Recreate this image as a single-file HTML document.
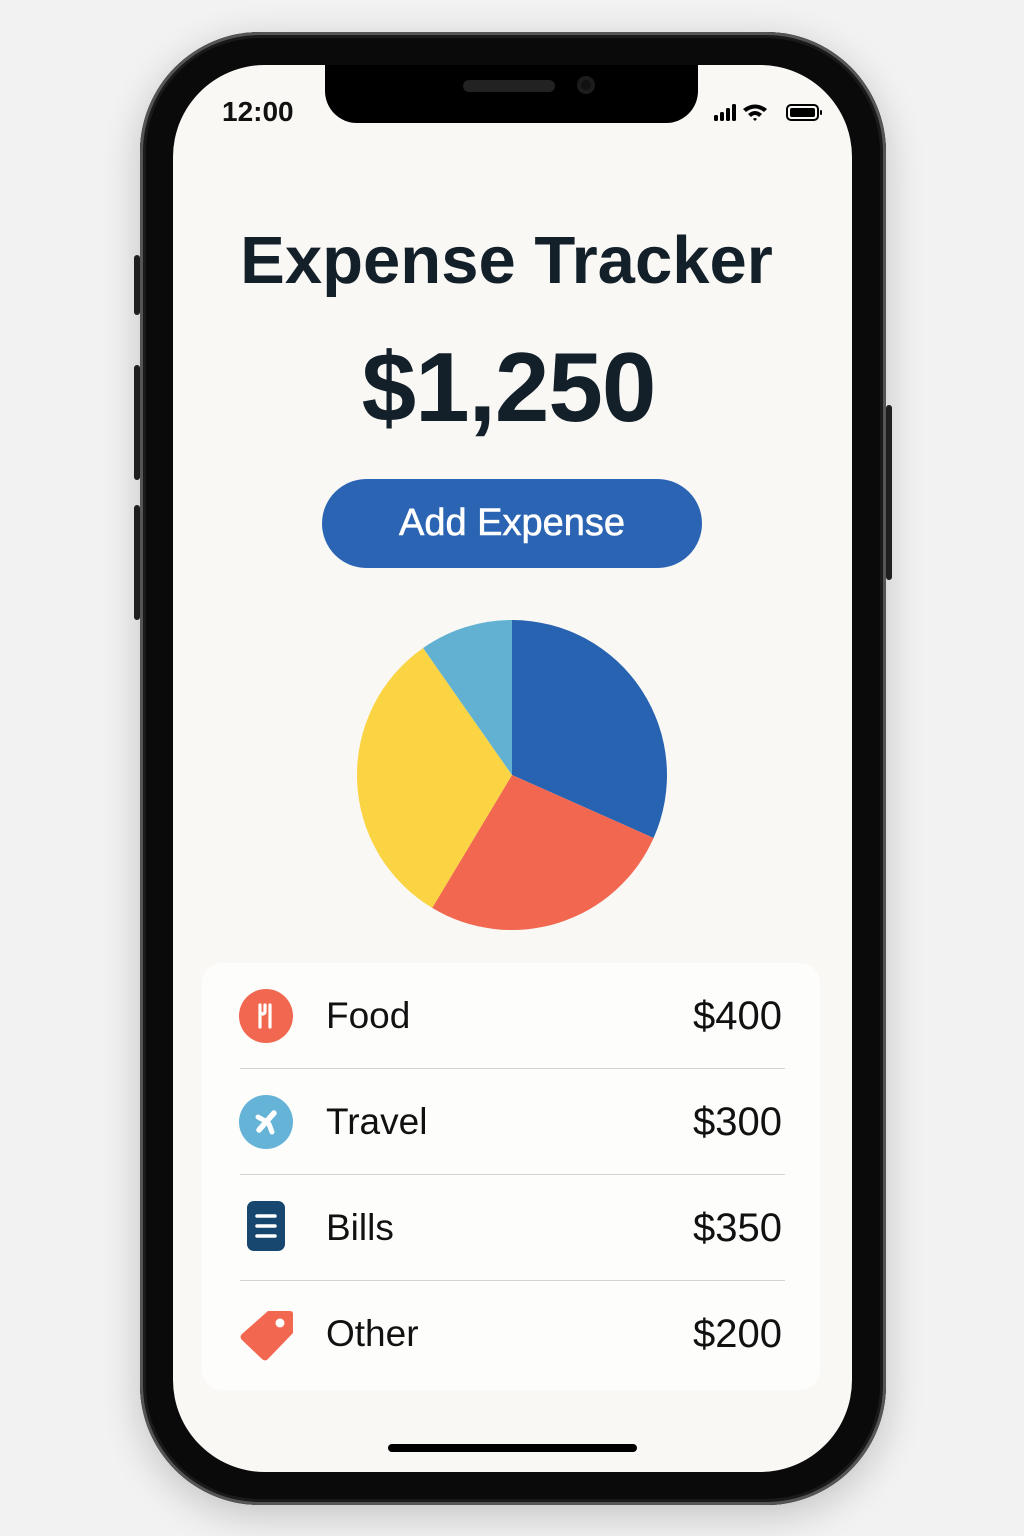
<!DOCTYPE html>
<html><head><style>
body{margin:0;width:1024px;height:1536px;background:#f2f2f2;position:relative;overflow:hidden;font-family:"Liberation Sans",sans-serif}
.abs{position:absolute}
.phone{left:140px;top:32px;width:746px;height:1473px;border-radius:120px;background:#0a0a0a;box-shadow:0 10px 40px rgba(0,0,0,.2),inset 0 0 0 3px #555,inset 0 0 0 6px #1a1a1a}
.screen{left:173px;top:65px;width:679px;height:1407px;border-radius:92px;background:#f9f8f5;overflow:hidden}
.notch{left:152px;top:-2px;width:373px;height:60px;background:#000;border-radius:0 0 32px 32px}
.t{color:#13202a;text-align:center;width:100%;left:0}
.row{left:0;width:618px;height:106px}
.lab{left:124px;font-size:37px;color:#111;line-height:106px}
.amt{right:38px;font-size:40px;color:#111;line-height:106px}
.div{left:38px;width:545px;height:1px;background:#d4d4d4}
</style></head><body>
<div class="abs" style="left:134px;top:255px;width:6px;height:60px;background:#222;border-radius:3px"></div>
<div class="abs" style="left:134px;top:365px;width:6px;height:115px;background:#222;border-radius:3px"></div>
<div class="abs" style="left:134px;top:505px;width:6px;height:115px;background:#222;border-radius:3px"></div>
<div class="abs" style="left:886px;top:405px;width:6px;height:175px;background:#222;border-radius:3px"></div>
<div class="abs phone"></div>
<div class="abs screen">
 <div class="abs notch">
  <div class="abs" style="left:138px;top:17px;width:92px;height:12px;border-radius:6px;background:#222"></div>
  <div class="abs" style="left:252px;top:13px;width:18px;height:18px;border-radius:9px;background:#111;box-shadow:inset 0 0 0 4px #1c1c1c"></div>
 </div>
 <div class="abs" style="left:49px;top:31px;font-size:28px;color:#111;font-weight:bold">12:00</div>
 <svg class="abs" style="left:540px;top:36px" width="112" height="22" viewBox="0 0 112 22">
  <rect x="1" y="14" width="4" height="6" rx="1.5"/><rect x="7" y="11" width="4" height="9" rx="1.5"/><rect x="13" y="7" width="4" height="13" rx="1.5"/><rect x="19" y="3" width="4" height="17" rx="1.5"/>
  <path d="M30 8 Q42 -1 54 8 L51 11 Q42 4 33 11Z M35 13 Q42 7 49 13 L46 16 Q42 12 38 16Z M40 18 L42 20 L44 18 Q42 16 40 18Z"/>
  <rect x="74" y="4" width="31" height="15" rx="4" fill="none" stroke="#000" stroke-width="2"/><rect x="77" y="7" width="25" height="9" rx="2"/><rect x="107" y="9" width="2" height="5" rx="1"/>
 </svg>
 <div class="abs t" style="left:-6px;top:157px;font-size:67px;font-weight:bold">Expense Tracker</div>
 <div class="abs t" style="left:-4px;top:266px;font-size:98px;font-weight:bold;letter-spacing:-1px">$1,250</div>
 <div class="abs" style="left:149px;top:414px;width:380px;height:89px;border-radius:45px;background:#2a64b3;color:#fff;font-size:38px;text-align:center;line-height:89px;-webkit-text-stroke:0.6px #fff">Add Expense</div>
 <svg class="abs" style="left:0;top:0" width="679" height="900">
  <g transform="translate(-173,-65)">
   <path d="M512 775 L512 620 A155 155 0 0 1 653.6 838Z" fill="#2763b0"/>
   <path d="M512 775 L653.6 838 A155 155 0 0 1 432.2 907.9Z" fill="#f26750"/>
   <path d="M512 775 L432.2 907.9 A155 155 0 0 1 423.1 648Z" fill="#fbd444"/>
   <path d="M512 775 L423.1 648 A155 155 0 0 1 512 620Z" fill="#62b1d2"/>
  </g>
 </svg>
 <div class="abs" style="left:29px;top:898px;width:618px;height:427px;background:#fdfdfc;border-radius:20px">
  <div class="abs row" style="top:0">
   <svg class="abs" style="left:37px;top:26px" width="54" height="54"><circle cx="27" cy="27" r="27" fill="#f26750"/><path d="M21 16v22M31 16v22M21 16v6q0 3 2.5 3" stroke="#fff" stroke-width="3.2" fill="none" stroke-linecap="round"/><path d="M26 16v6q0 3-2.5 3" stroke="#fff" stroke-width="3.2" fill="none" stroke-linecap="round"/></svg>
   <div class="abs lab">Food</div><div class="abs amt">$400</div></div>
  <div class="abs div" style="top:105px"></div>
  <div class="abs row" style="top:106px">
   <svg class="abs" style="left:37px;top:26px" width="54" height="54"><circle cx="27" cy="27" r="27" fill="#65b3d6"/><path d="M20 35 L35 18" stroke="#fff" stroke-width="5.5" stroke-linecap="round"/><path d="M19 22 L28 27 M30 29 L33 37" stroke="#fff" stroke-width="5" stroke-linecap="round"/></svg>
   <div class="abs lab">Travel</div><div class="abs amt">$300</div></div>
  <div class="abs div" style="top:211px"></div>
  <div class="abs row" style="top:212px">
   <svg class="abs" style="left:45px;top:26px" width="40" height="52"><rect x="0" y="0" width="38" height="50" rx="7" fill="#17466f"/><path d="M10 15h18M10 25h18M10 35h18" stroke="#fff" stroke-width="3.5" stroke-linecap="round"/></svg>
   <div class="abs lab">Bills</div><div class="abs amt">$350</div></div>
  <div class="abs div" style="top:317px"></div>
  <div class="abs row" style="top:318px">
   <svg class="abs" style="left:36px;top:28px" width="56" height="54"><path d="M30 2 L52 2 Q55 2 55 5 L55 24 L30 50 Q27 53 24 50 L4 31 Q1 28 4 25Z" fill="#f26750"/><circle cx="42" cy="14" r="4.5" fill="#fff"/></svg>
   <div class="abs lab">Other</div><div class="abs amt">$200</div></div>
 </div>
 <div class="abs" style="left:215px;top:1379px;width:249px;height:8px;border-radius:4px;background:#000"></div>
</div>
</body></html>
